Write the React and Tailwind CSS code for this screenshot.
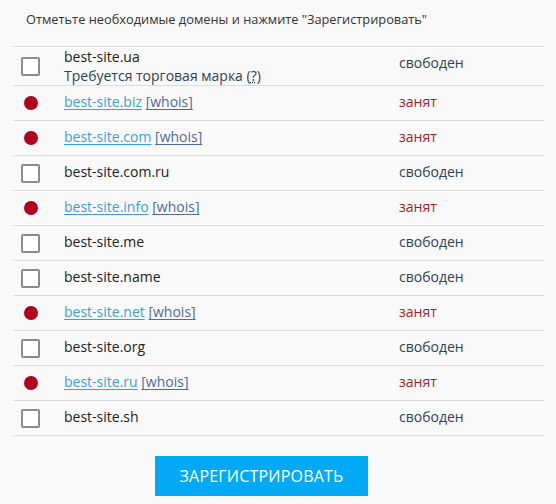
import React from 'react';

const domains = [
    { name: 'best-site.biz', busy: true },
    { name: 'best-site.com', busy: true },
    { name: 'best-site.com.ru', busy: false },
    { name: 'best-site.info', busy: true },
    { name: 'best-site.me', busy: false },
    { name: 'best-site.name', busy: false },
    { name: 'best-site.net', busy: true },
    { name: 'best-site.org', busy: false },
    { name: 'best-site.ru', busy: true },
    { name: 'best-site.sh', busy: false },
];

function Checkbox() {
    return <div className="w-[19px] h-[19px] border-2 border-[#8c8c8c] rounded-[2px] bg-white"></div>;
}

function Dot() {
    return <div className="w-[14px] h-[14px] rounded-full bg-[#b0001e] ml-[3px]"></div>;
}

export default function App() {
    return (
        <div className="w-[556px] h-[504px] bg-[#f9f9f9] text-[14px] text-[#333] font-['Open_Sans',sans-serif]">
            <div className="pl-[26px] pt-[9px] h-[46px] leading-[20px] text-[12.8px]">
                Отметьте необходимые домены и нажмите "Зарегистрировать"
            </div>
            <div className="mx-[13px] w-[531px] border-t border-[#dcdcdc]">
                <div className="flex items-center h-[39px] border-b border-[#dcdcdc]">
                    <div className="w-[51px] pl-[8px] flex items-center"><Checkbox /></div>
                    <div className="w-[335px] leading-[19px] text-[#222] -mt-[1px]">
                        <div>best-site.ua</div>
                        <div className="text-[#2d4356]">Требуется торговая марка (<span className="underline decoration-dotted">?</span>)</div>
                    </div>
                    <div className="text-[#2d4356] -mt-[7px]">свободен</div>
                </div>
                {domains.map((d) => (
                    <div key={d.name} className="flex items-center h-[35px] border-b border-[#dcdcdc]">
                        <div className="w-[51px] pl-[8px] flex items-center">
                            {d.busy ? <Dot /> : <Checkbox />}
                        </div>
                        <div className="w-[335px] -mt-[3px]">
                            {d.busy ? (
                                <>
                                    <span className="text-[#3d9fd9] underline underline-offset-2">{d.name}</span>{' '}
                                    <span className="text-[#50699a] underline underline-offset-2">[whois]</span>
                                </>
                            ) : (
                                <span className="text-[#222]">{d.name}</span>
                            )}
                        </div>
                        <div className={d.busy ? 'text-[#a51d2d] -mt-[3px]' : 'text-[#2d4356] -mt-[3px]'}>
                            {d.busy ? 'занят' : 'свободен'}
                        </div>
                    </div>
                ))}
            </div>
            <div className="flex pt-[20px] pl-[155px]">
                <button className="w-[213px] h-[40px] bg-[#03a9f4] text-white text-[16px] tracking-[0.2px] uppercase">
                    Зарегистрировать
                </button>
            </div>
        </div>
    );
}
